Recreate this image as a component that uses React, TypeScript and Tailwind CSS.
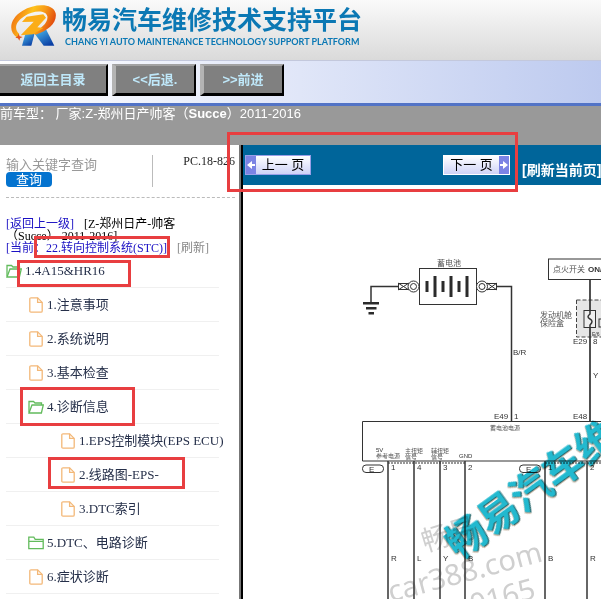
import type { ReactNode } from "react";
import clsx from "clsx";

type TreeItem = {
  label: string;
  level: 1 | 2 | 3;
  icon: "open" | "closed" | "file";
  mark?: string;
};

const tree: TreeItem[] = [
  { label: "1.4A15&HR16", level: 1, icon: "open", mark: "left-[11px] top-[6px] h-[27px] w-[114px]" },
  { label: "1.注意事项", level: 2, icon: "file" },
  { label: "2.系统说明", level: 2, icon: "file" },
  { label: "3.基本检查", level: 2, icon: "file" },
  { label: "4.诊断信息", level: 2, icon: "open", mark: "left-[14px] -top-[3px] h-[39px] w-[115px]" },
  { label: "1.EPS控制模块(EPS ECU)", level: 3, icon: "file" },
  { label: "2.线路图-EPS-", level: 3, icon: "file", mark: "left-[42px] -top-[1px] h-[32px] w-[137px]" },
  { label: "3.DTC索引", level: 3, icon: "file" },
  { label: "5.DTC、电路诊断", level: 2, icon: "closed" },
  { label: "6.症状诊断", level: 2, icon: "file" },
];

function RedMark({ className }: { className: string }) {
  return <div className={clsx("pointer-events-none absolute z-10 border-3 border-[#e83e40]", className)} />;
}

function Logo() {
  return (
    <svg width="50" height="45" viewBox="30 12 150 135" className="shrink-0" aria-hidden="true">
      <defs>
        <linearGradient id="sun" x1="0" y1="0.3" x2="1" y2="0.6">
          <stop offset="0" stopColor="#ef6a10" />
          <stop offset="0.4" stopColor="#fdc21c" />
          <stop offset="0.65" stopColor="#f79a18" />
          <stop offset="1" stopColor="#dd3a0c" />
        </linearGradient>
        <linearGradient id="leg" x1="0" y1="0" x2="0.7" y2="1">
          <stop offset="0" stopColor="#4fc0f0" />
          <stop offset="1" stopColor="#0b3fa4" />
        </linearGradient>
      </defs>
      <path d="M76 102 L104 100 L94 137 L66 137 Z" fill="url(#leg)" />
      <path d="M104 101 L138 88 L163 137 L131 137 Z" fill="url(#leg)" />
      <path
        d="M52 113 C22 94 30 54 68 32 C104 11 158 8 167 40 C172 68 146 92 107 104 L98 98 C124 86 145 68 142 49 C138 29 99 31 74 48 C46 66 41 86 58 102 Z"
        fill="url(#sun)"
      />
      <path d="M80 50 L130 43 L138 53 L112 82 L130 84 L99 103 L62 106 L101 65 L66 66 Z" fill="#fbad17" />
      <path d="M56 101 L59 109 L68 111 L60 115 L58 122 L54 115 L46 113 L53 109 Z" fill="#e5531b" />
    </svg>
  );
}

function FolderIcon({ open }: { open: boolean }) {
  return (
    <svg width="16" height="14" viewBox="0 0 16 14" fill="none" stroke="#62bb5c" strokeWidth="1.3" aria-hidden="true">
      {open ? (
        <>
          <path d="M1 12.5V1.5H5.5L7 3H13.5V5" />
          <path d="M1 13L4 5H15.3L13.4 13Z" />
        </>
      ) : (
        <path d="M.8 12.7V1.2H5.8L7.2 3.4H15.2V12.7ZM.8 5.4H15" />
      )}
    </svg>
  );
}

function FileIcon() {
  return (
    <svg width="14" height="16" viewBox="0 0 14 16" fill="none" stroke="#f3b878" strokeWidth="1.3" aria-hidden="true">
      <path d="M.8 2Q.8.8 2 .8H8.6L13.2 5.4V14Q13.2 15.2 12 15.2H2Q.8 15.2.8 14Z" />
      <path d="M8.6.8V5.4H13.2" />
    </svg>
  );
}

function ToolButton({ children, className }: { children: ReactNode; className: string }) {
  return (
    <button
      className={clsx(
        "h-8 border-t-2 border-r-2 border-b-3 border-t-[#a2a2a2] border-r-black border-b-black border-l-[#b4b4b4] bg-[#808080] text-[13px] font-bold text-[#bfe8fa]",
        className
      )}
    >
      {children}
    </button>
  );
}

function PageArrow({ next }: { next?: boolean }) {
  return (
    <svg width="10" height="18" viewBox="0 0 10 18" className="shrink-0 bg-[#7b83e4]" aria-hidden="true">
      <path
        d={next ? "M1 8H4V5L9 9L4 13V10H1Z" : "M9 8H6V5L1 9L6 13V10H9Z"}
        fill="#fff"
      />
    </svg>
  );
}

function Diagram() {
  const pins = [
    { x: 388, pin: "1", color: "R" },
    { x: 414, pin: "4", color: "L" },
    { x: 440, pin: "3", color: "Y" },
    { x: 465, pin: "2", color: "B" },
    { x: 545, pin: "1", color: "B" },
    { x: 587, pin: "2", color: "R" },
  ];

  return (
    <svg
      width="358"
      height="414"
      viewBox="243 185 358 414"
      className="block font-['Liberation_Sans','Noto_Sans_CJK_SC',sans-serif]"
    >
      {/* watermark */}
      <g fill="#cfcfcf">
        <text transform="translate(425 552) rotate(-17)" fontSize="28">畅易</text>
        <text transform="translate(391 602) rotate(-15)" fontSize="29" className="font-['Noto_Sans',sans-serif]">
          car388.com
        </text>
        <text transform="translate(473 615) rotate(-15)" fontSize="29" className="font-['Noto_Sans',sans-serif]">
          0165
        </text>
      </g>

      {/* battery and ground */}
      <g fill="none" stroke="#333" strokeWidth="1.5">
        <path d="M371 302V286.500H398M497 286.500H511.500V421" />
        <g strokeWidth="1">
          <rect x="419.500" y="268.500" width="57" height="36" />
          <rect x="398.500" y="283.500" width="10" height="6" />
          <path d="M398 283L409 290M398 290L409 283" />
          <circle cx="413.500" cy="286.500" r="5.500" fill="#fff" />
          <circle cx="413.500" cy="286.500" r="3" />
          <rect x="486.500" y="283.500" width="10" height="6" />
          <path d="M487 283L497 290M487 290L497 283" />
          <circle cx="482" cy="286.500" r="5.500" fill="#fff" />
          <circle cx="482" cy="286.500" r="3" />
        </g>
      </g>
      <path
        d="M363 302H379V304.500H363ZM366 307H376.500V309.500H366ZM368.500 312H374V314.500H368.500ZM425.500 281H428.500V292H425.500ZM433.500 276H436.500V297H433.500ZM441.500 281H444.500V292H441.500ZM449.500 276H452.500V297H449.500ZM457.500 281H460.500V292H457.500ZM465.500 276H468.500V297H465.500Z"
        fill="#2b2b2b"
      />

      {/* ignition switch and fuse box */}
      <rect x="576.500" y="300" width="40" height="37" fill="#e6e6e6" stroke="#444" strokeDasharray="4 2" />
      <g fill="none" stroke="#333">
        <rect x="548.500" y="259" width="70" height="20.500" />
        <path d="M590 279V311M590 327V421" strokeWidth="1.7" />
        <rect x="584" y="310.500" width="11.500" height="17" fill="#eee" />
        <path d="M590 311V314Q586 317 590 319T590 325V328" strokeWidth="1.5" />
        <rect x="599" y="319" width="12" height="8" />
      </g>

      {/* control unit */}
      <g fill="none" stroke="#333">
        <path d="M601 421.500H362.500V461H601" />
        <path d="M388 463H466M545 463H601" strokeDasharray="2 1" />
        <rect x="362.500" y="465" width="21" height="7.500" rx="3.500" />
        <rect x="519.500" y="465" width="21" height="7.500" rx="3.500" />
        {pins.map((p) => (
          <path key={p.x} d={`M${p.x} 461V599`} strokeWidth="1.5" />
        ))}
      </g>

      <g fill="#333" fontSize="8">
        {pins.map((p) => (
          <g key={p.x}>
            <text x={p.x + 3} y="470">{p.pin}</text>
            <text x={p.x + 3} y="561">{p.color}</text>
          </g>
        ))}
        <text x="369" y="472">E</text>
        <text x="526" y="472">E</text>
        <text x="513" y="355">B/R</text>
        <text x="494" y="419">E49</text>
        <text x="514" y="419">1</text>
        <text x="573" y="419">E48</text>
        <text x="573" y="344">E29</text>
        <text x="593" y="344">8</text>
        <text x="593" y="378">Y</text>
        <text x="588" y="272" fontWeight="bold">ON/</text>
        <text x="592" y="336" fontSize="5">E/6</text>
        <text x="459" y="458" fontSize="6">GND</text>
        <text x="376" y="452" fontSize="6">5V</text>
      </g>
      <g fill="#555">
        <text x="437" y="266" fontSize="8">蓄电池</text>
        <text x="553" y="272" fontSize="8">点火开关</text>
        <text x="540" y="318" fontSize="8">发动机舱</text>
        <text x="540" y="326" fontSize="8">保险盒</text>
        <text x="490" y="430" fontSize="6">蓄电池电源</text>
        <text x="376" y="458" fontSize="6">参考电源</text>
        <text x="405" y="453" fontSize="6">主扭矩</text>
        <text x="405" y="459" fontSize="6">信号</text>
        <text x="431" y="453" fontSize="6">辅扭矩</text>
        <text x="431" y="459" fontSize="6">信号</text>
      </g>

      <text
        transform="translate(458 560) rotate(-36)"
        fontSize="40"
        fontWeight="bold"
        fill="#22b9cf"
        className="mix-blend-multiply [filter:drop-shadow(1px_1px_0_#2b6a70)_drop-shadow(-1px_1px_0_#c9b9a8)]"
      >
        畅易汽车维
      </text>
    </svg>
  );
}

export default function App() {
  return (
    <div className="flex min-h-screen flex-col overflow-hidden bg-white font-['Liberation_Sans','Noto_Sans_CJK_SC',sans-serif]">
      {/* Header */}
      <header className="flex h-15 items-start gap-[2px] bg-linear-to-b from-[#fafafa] to-[#dadada] pt-1 pl-[10px]">
        <Logo />
        <div className="whitespace-nowrap text-[#0b78b4]">
          <h1 className="text-[25px] leading-8 font-bold">畅易汽车维修技术支持平台</h1>
          <p className="pl-[3px] font-['Lato',sans-serif] text-[9px] leading-3 font-bold">
            CHANG YI AUTO MAINTENANCE TECHNOLOGY SUPPORT PLATFORM
          </p>
        </div>
      </header>

      {/* Toolbar */}
      <nav className="flex h-[46px] items-start gap-1 border-t border-b-3 border-t-[#c3c8dc] border-b-[#5273c6] bg-linear-to-r from-white via-[#e0e6f8] to-[#bdcaef] pt-[3px]">
        <ToolButton className="w-[108px]">返回主目录</ToolButton>
        <ToolButton className="w-[84px] border-l-4">&lt;&lt;后退.</ToolButton>
        <ToolButton className="w-[84px] border-l-4">&gt;&gt;前进</ToolButton>
      </nav>

      <div className="h-[39px] bg-[#999] text-[13px] leading-4 whitespace-pre text-white">
        前车型： 厂家:Z-郑州日产帅客（<b>Succe</b>）2011-2016
      </div>

      <div className="flex flex-1">
        {/* Sidebar */}
        <aside className="w-[239px] shrink-0 pl-[6px] font-['Liberation_Serif','Noto_Sans_CJK_SC',serif]">
          <div className="mr-1 flex justify-between border-b border-dashed border-[#bbb] pt-[10px] pb-[10px]">
            <form className="flex h-8 w-[147px] flex-col items-start border-r border-[#bbb]">
              <input
                aria-label="关键字"
                placeholder="输入关键字查询"
                className="h-[17px] w-full pt-[3px] text-[13px] leading-4 outline-none placeholder:text-[#999]"
              />
              <button type="button" className="h-[15px] w-[46px] rounded-sm bg-[#0473cf] text-[13px] leading-[15px] text-white">
                查询
              </button>
            </form>
            <span className="text-xs leading-3 text-[#222]">PC.18-826</span>
          </div>

          <div className="relative pt-5 text-xs leading-3 whitespace-nowrap text-black">
            <p>
              <a href="#" className="text-[#1b11c4]">[返回上一级]</a>
              <span className="pl-[10px]">[Z-郑州日产-帅客</span>
            </p>
            <p>（Succe） 2011-2016]</p>
            <p className="text-[#1b11c4]">
              [当前：<a href="#">22.转向控制系统(STC)]</a>
              <a href="#" className="pl-[10px] text-[#888]">[刷新]</a>
            </p>
            <RedMark className="top-[38px] left-[28px] h-[22px] w-[136px]" />
          </div>

          <ul className="mr-5 text-[13px] text-[#26304a]">
            {tree.map((item) => (
              <li
                key={item.label}
                className={clsx(
                  "relative flex h-[34px] items-center gap-[3px] border-b border-[#f0f0f0] whitespace-nowrap",
                  item.level === 2 && "pl-[22px]",
                  item.level === 3 && "pl-[54px]"
                )}
              >
                <span className="flex w-4 shrink-0 justify-center">
                  {item.icon === "file" ? <FileIcon /> : <FolderIcon open={item.icon === "open"} />}
                </span>
                <a href="#">{item.label}</a>
                {item.mark && <RedMark className={item.mark} />}
              </li>
            ))}
          </ul>
        </aside>

        {/* Manual page */}
        <div className="w-[2px] shrink-0 bg-[#777]" />
        <main className="relative min-w-0 flex-1 border-l-2 border-black">
          <div className="flex h-10 items-start bg-[#00659a] pt-[10px] pl-[2px] whitespace-nowrap">
            <button className="flex h-5 w-[66px] shrink-0 items-center border border-[#9a9fe8] bg-linear-to-b from-white to-[#cfd3f7] text-[13px] text-black">
              <PageArrow />
              <span className="flex-1">上一 页</span>
            </button>
            <button className="ml-[132px] flex h-5 w-[67px] shrink-0 items-center border border-white bg-linear-to-b from-white to-[#cfd3f7] text-[13px] text-black">
              <span className="flex-1">下一 页</span>
              <PageArrow next />
            </button>
            <a href="#" className="ml-3 pt-[5px] text-sm leading-5 font-bold text-white">[刷新当前页]</a>
          </div>
          <Diagram />
          <RedMark className="-top-[13px] -left-[16px] h-[60px] w-[291px]" />
        </main>
      </div>
    </div>
  );
}
